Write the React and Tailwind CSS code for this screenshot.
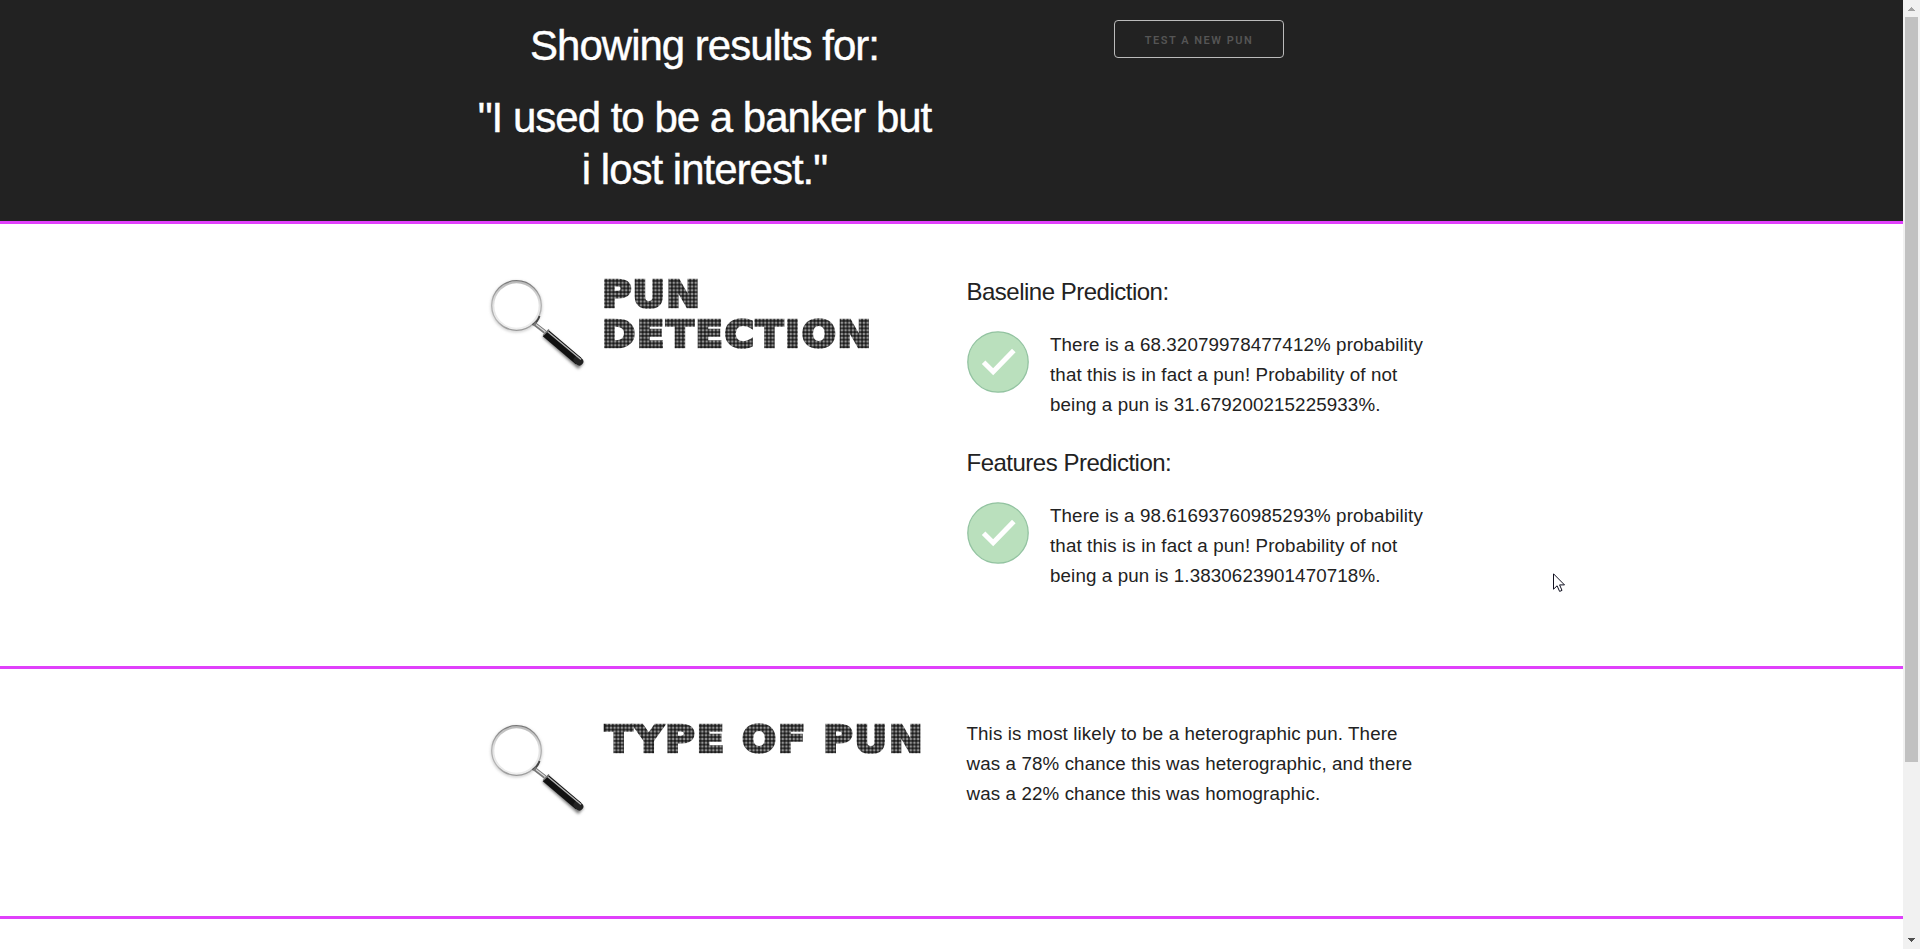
import React from 'react';

function Magnifier() {
  return (
    <svg className="h-[110px] w-[120px] shrink-0" viewBox="0 0 120 110" aria-hidden="true">
      <defs>
        <linearGradient id="rim" x1="0" y1="0" x2="0" y2="1">
          <stop offset="0" stopColor="#777" />
          <stop offset="0.35" stopColor="#aaa" />
          <stop offset="0.8" stopColor="#b5b5b5" />
          <stop offset="1" stopColor="#999" />
        </linearGradient>
        <linearGradient id="inner" x1="0" y1="0" x2="0" y2="1">
          <stop offset="0" stopColor="#bbb" />
          <stop offset="0.5" stopColor="#e4e4e4" />
          <stop offset="1" stopColor="#eee" />
        </linearGradient>
        <filter id="soft" x="-20%" y="-20%" width="140%" height="140%">
          <feGaussianBlur stdDeviation="1.6" />
        </filter>
      </defs>
      <circle cx="36.5" cy="36.5" r="24.5" fill="none" stroke="#bbb" strokeWidth="2" filter="url(#soft)" />
      <path d="M65 64 L101 96" stroke="#777" strokeWidth="8" filter="url(#soft)" />
      <circle cx="36.5" cy="35.5" r="23.2" fill="#fff" stroke="url(#inner)" strokeWidth="2" />
      <circle cx="36.5" cy="35.5" r="24.8" fill="none" stroke="url(#rim)" strokeWidth="1.2" />
      <path d="M59.5 46 Q58 51.5 52.5 55" fill="none" stroke="#444" strokeWidth="1.8" />
      <path d="M54 53.5 L65 62" stroke="#777" strokeWidth="4" />
      <path d="M56 54.5 L65 61.5" stroke="#ddd" strokeWidth="1.2" />
      <path d="M65.5 63 L98.5 91" stroke="#111" strokeWidth="8.5" strokeLinecap="butt" />
      <path d="M97.5 90 L99.3 91.5" stroke="#222" strokeWidth="8" strokeLinecap="round" />
      <path d="M67.5 61.5 L101 89.5" stroke="#b5b5b5" strokeWidth="1.4" />
      <path d="M63.5 65 L69 59.5" stroke="#777" strokeWidth="1.2" />
    </svg>
  );
}

function CheckCircle() {
  return (
    <svg className="mt-px h-[62px] w-[62px] shrink-0" viewBox="0 0 62 62" aria-hidden="true">
      <circle cx="31" cy="31" r="30.2" fill="#bae0bd" stroke="#93c3a1" strokeWidth="1.3" />
      <path d="M16.6 31.2 L26.2 40.8 L46.8 19.5" fill="none" stroke="#fff" strokeWidth="5" />
    </svg>
  );
}

// A heavy, widened line of text under a lattice that splits it into dots.
function DotLine({ children, className }) {
  return (
    <span className="relative block h-[40px] w-[340px] whitespace-nowrap after:absolute after:inset-0 after:bg-[radial-gradient(circle_at_center,transparent_1.2px,rgba(255,255,255,0.35)_1.8px,#fff_2.4px)] after:bg-[length:3.67px_3.75px] after:bg-[position:2.3px_4px] after:content-['']">
      <span className={"inline-block origin-left scale-x-[1.1] font-['DejaVu_Sans'] text-[36.5px] leading-[40px] font-bold text-[#1c1c1c] [-webkit-text-stroke:2.7px_#1c1c1c] [font-kerning:none] " + className}>
        {children}
      </span>
    </span>
  );
}

function Lines({ lines }) {
  return (
    <p className="text-[18.75px] leading-[30px] tracking-[0.12px] whitespace-nowrap">
      {lines.map((line) => (
        <span className="block" key={line}>{line}</span>
      ))}
    </p>
  );
}

function Prediction({ title, lines }) {
  return (
    <div className="mb-[25px]">
      <h5 className="mb-5 text-[24px] leading-[36px] tracking-[-0.5px]">{title}</h5>
      <div className="flex gap-[21.5px]">
        <CheckCircle />
        <Lines lines={lines} />
      </div>
    </div>
  );
}

function Scrollbar() {
  return (
    <div className="flex w-[17px] shrink-0 flex-col items-center bg-[#f1f1f1]">
      <svg className="h-[17px] w-[17px]" viewBox="0 0 17 17" shapeRendering="crispEdges">
        <path d="M8 7h1v1h1v1h1v1h1v1H5v-1h1V9h1V8h1z" fill="#a3a3a3" />
      </svg>
      <div className="h-[745px] w-[13px] bg-[#c1c1c1]" />
      <svg className="mt-auto h-[17px] w-[17px]" viewBox="0 0 17 17" shapeRendering="crispEdges">
        <path d="M5 6h7v1h-1v1h-1v1H9v1H8V9H7V8H6V7H5z" fill="#505050" />
      </svg>
    </div>
  );
}

export default function App() {
  return (
    <div className="relative flex h-[949px] w-[1920px] overflow-hidden bg-white font-['Liberation_Sans',Arial,sans-serif] text-[#222]">
      <main className="flex w-[1903px] flex-col">
        <header className="flex h-[224px] shrink-0 border-b-[3px] border-[#e040fb] bg-[#222] pt-[20px] pl-[472px] text-white">
          <div className="w-[465px] text-center text-[42px] leading-[52px] tracking-[-1px] whitespace-nowrap [-webkit-text-stroke:0.4px_#fff]">
            <h2 className="mb-5">Showing results for:</h2>
            <h2>
              <span className="block">"I used to be a banker but</span>
              <span className="block">i lost interest."</span>
            </h2>
          </div>
          <button className="ml-[177px] h-[38px] w-[170px] rounded-[4px] border border-[#bbb] pt-[2px] font-[Roboto] text-[11px] leading-[36px] font-semibold tracking-[1.5px] whitespace-nowrap text-[#555]">
            TEST A NEW PUN
          </button>
        </header>

        <section className="flex h-[445px] shrink-0 border-b-[3px] border-[#e040fb] pl-[480px]">
          <div className="flex w-[486.5px] pt-[46px]">
            <Magnifier />
            <h3 className="w-[360px] pt-[5px] pl-[2px]">
              <DotLine className="tracking-[1px]">PUN</DotLine>
              <DotLine className="tracking-[1.6px]">DETECTION</DotLine>
            </h3>
          </div>
          <div className="pt-[50px]">
            <Prediction
              title="Baseline Prediction:"
              lines={['There is a 68.32079978477412% probability', 'that this is in fact a pun! Probability of not', 'being a pun is 31.679200215225933%.']}
            />
            <Prediction
              title="Features Prediction:"
              lines={['There is a 98.61693760985293% probability', 'that this is in fact a pun! Probability of not', 'being a pun is 1.3830623901470718%.']}
            />
          </div>
        </section>

        <section className="flex h-[250px] shrink-0 border-b-[3px] border-[#e040fb] pl-[480px]">
          <div className="flex w-[486.5px] pt-[46px]">
            <Magnifier />
            <h3 className="w-[360px] pt-[5px] pl-[5px]">
              <DotLine className="tracking-[1.75px]">TYPE OF PUN</DotLine>
            </h3>
          </div>
          <div className="pt-[50px]">
            <Lines lines={['This is most likely to be a heterographic pun. There', 'was a 78% chance this was heterographic, and there', 'was a 22% chance this was homographic.']} />
          </div>
        </section>
      </main>
      <Scrollbar />
      <svg className="absolute top-[573px] left-[1553px] h-[20px] w-[13px]" viewBox="0 0 13 20" aria-hidden="true">
        <path d="M0.5 0.8 V16.2 L4.1 12.8 L6.6 18.4 L9 17.4 L6.6 11.9 H11.5 Z" fill="#fff" stroke="#101020" strokeWidth="1" />
      </svg>
    </div>
  );
}
